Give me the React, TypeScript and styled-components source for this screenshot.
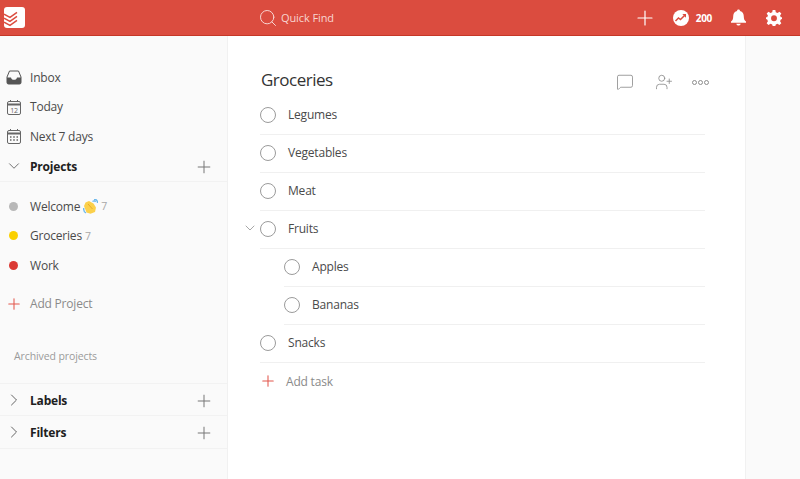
import React from "react";
import styled, { createGlobalStyle } from "styled-components";
import { Search, Plus, ChevronDown, ChevronRight, MessageSquare, UserPlus } from "lucide-react";

const GlobalStyle = createGlobalStyle`
  html, body {
    margin: 0;
    padding: 0;
    height: 100%;
    background: #fff;
    overflow: hidden;
    font-family: "Open Sans", "Noto Sans", sans-serif;
  }
  * { box-sizing: border-box; }
`;

const Page = styled.div`
  width: 800px;
  height: 479px;
  display: flex;
  flex-direction: column;
  overflow: hidden;
`;

const TopBar = styled.header`
  height: 36px;
  flex: none;
  display: flex;
  align-items: center;
  background: #db4c3f;
  border-bottom: 1px solid #c53727;
  color: #fff;
`;

const LogoSlot = styled.div`
  width: 258px;
  padding-left: 4px;
  display: flex;
  align-items: center;
`;

const QuickFind = styled.div`
  display: flex;
  align-items: center;
  gap: 3px;
  color: #f8d5d1;
  font-size: 11px;
  letter-spacing: -0.1px;
  flex: 1;
`;

const TopActions = styled.div`
  display: flex;
  align-items: center;
  gap: 20px;
  padding-right: 18px;
`;

const Karma = styled.div`
  display: flex;
  align-items: center;
  gap: 7px;
  margin: 0 -1px 0 -4px;
  font-size: 10px;
  font-weight: 700;
  letter-spacing: -0.3px;
`;

const Body = styled.div`
  flex: 1;
  display: flex;
  min-height: 0;
`;

const Sidebar = styled.aside`
  width: 228px;
  flex: none;
  background: #fafafa;
  border-right: 1px solid #f1f1f1;
  padding-top: 26.5px;
`;

const NavItem = styled.div`
  height: 29.5px;
  display: flex;
  align-items: center;
  color: #4a4a4a;
  font-size: 12px;
  letter-spacing: -0.2px;
`;

const NavIcon = styled.span`
  width: 30px;
  flex: none;
  display: flex;
  justify-content: center;
  padding-right: 3px;
`;

const Dot = styled.span<{ $color: string }>`
  width: 9px;
  height: 9px;
  border-radius: 50%;
  background: ${p => p.$color};
`;

const Count = styled.span`
  margin-left: 3px;
  color: #a8a8a8;
  font-size: 10.5px;
`;

const Section = styled.div<{ $top?: boolean; $height: number }>`
  height: ${p => p.$height}px;
  display: flex;
  align-items: center;
  justify-content: space-between;
  padding-right: 13px;
  padding-top: ${p => (p.$top ? "1px" : "0")};
  border-bottom: 1px solid #f2f2f2;
  border-top: ${p => (p.$top ? "1px solid #f2f2f2" : "none")};
`;

const SectionTitle = styled.div`
  display: flex;
  align-items: center;
  color: #202020;
  font-size: 12px;
  font-weight: 700;
  letter-spacing: -0.2px;
`;

const SectionPlus = styled(Plus).attrs({ size: 20, strokeWidth: 1.2, color: "#777" })`
  margin-top: 2px;
`;

const ProjectList = styled.div`
  padding-top: 9.5px;
`;

const AddRow = styled(NavItem)`
  margin-top: 9px;
  color: #8a8a8a;
`;

const Archived = styled.div`
  margin-top: 30px;
  padding-left: 14px;
  height: 34.5px;
  color: #9a9a9a;
  font-size: 10.5px;
  line-height: 15px;
  letter-spacing: -0.1px;
`;

const Main = styled.main`
  width: 517px;
  flex: none;
  background: #fff;
  padding: 0 40px 0 32px;
`;

const TitleRow = styled.div`
  height: 61px;
  display: flex;
  align-items: center;
  justify-content: space-between;
  padding-top: 28px;
  padding-bottom: 1px;
`;

const Title = styled.h1`
  margin: 0 0 0 1px;
  font-size: 17px;
  font-weight: 400;
  line-height: 30px;
  letter-spacing: -0.5px;
  color: #333;
`;

const ViewActions = styled.div`
  display: flex;
  align-items: center;
  gap: 21px;
  color: #8c8c8c;
  margin: 4px -4px 0 0;
`;

const MoreSlot = styled.span`
  display: flex;
  margin-left: -2px;
`;

const Task = styled.div<{ $child?: boolean }>`
  position: relative;
  height: 38px;
  margin-left: ${p => (p.$child ? "24px" : "0")};
  padding: 0 0 2px 28px;
  display: flex;
  align-items: center;
  border-bottom: 1px solid #f0f0f0;
  color: #4a4a4a;
  font-size: 12px;
  letter-spacing: -0.2px;
`;

const Check = styled.span`
  position: absolute;
  left: 0;
  top: 10px;
  width: 16px;
  height: 16px;
  border: 1px solid #9b9b9b;
  border-radius: 50%;
`;

const Collapse = styled.span`
  position: absolute;
  left: -18px;
  top: 9px;
  display: flex;
  color: #909090;
`;

const AddTask = styled.div`
  height: 38px;
  margin-left: -1px;
  padding-bottom: 2px;
  display: flex;
  align-items: center;
  gap: 9px;
  color: #8a8a8a;
  font-size: 12px;
  letter-spacing: -0.2px;
`;

const Gutter = styled.div`
  flex: 1;
  background: #fafafa;
  border-left: 1px solid #f1f1f1;
`;

const Logo = () => (
  <svg width="21" height="21" viewBox="0 0 21 21">
    <rect width="21" height="21" rx="3" fill="#fff" />
    <g fill="none" stroke="#db4c3f" strokeWidth="1.5">
      <path d="M0 7.2 L6 10.4 L13 5.4" />
      <path d="M0 11.2 L6 14.4 L13 9.4" />
      <path d="M0 15.2 L6 18.4 L13 13.4" />
    </g>
  </svg>
);

const KarmaIcon = () => (
  <svg width="16" height="16" viewBox="0 0 16 16">
    <circle cx="8" cy="8" r="8" fill="#fff" />
    <path d="M2.5 11 L5.5 8 L7.5 9.5 L11.5 5.5" fill="none" stroke="#db4c3f" strokeWidth="1.5" />
    <path d="M9.3 4 H13 V7.7 Z" fill="#db4c3f" />
  </svg>
);

const Bell = () => (
  <svg width="15" height="17" viewBox="0 0 15 17">
    <path d="M7.5 0.5 C8.5 0.5 9 1.2 9 2 C11.8 2.7 12.8 5 12.8 7.5 C12.8 10.2 13.6 11.5 15 12.6 V13.8 H0 V12.6 C1.4 11.5 2.2 10.2 2.2 7.5 C2.2 5 3.2 2.7 6 2 C6 1.2 6.5 0.5 7.5 0.5 Z" fill="#fff" />
    <path d="M5.3 14.7 H9.7 C9.5 15.9 8.6 16.5 7.5 16.5 C6.4 16.5 5.5 15.9 5.3 14.7 Z" fill="#fff" />
  </svg>
);

const Gear = () => (
  <svg width="16" height="16" viewBox="0 0 24 24">
    <path
      fillRule="evenodd"
      fill="#fff"
      d="M10 0 H14 L14.7 3.4 L17.3 4.5 L20.2 2.6 L23 5.4 L21.1 8.3 L22.2 10.9 L24 11 V13.5 L22.2 14.3 L21.1 16.9 L23 19.8 L20.2 22.6 L17.3 20.7 L14.7 21.8 L14 24 H10 L9.3 21.8 L6.7 20.7 L3.8 22.6 L1 19.8 L2.9 16.9 L1.8 14.3 L0 13.5 V11 L1.8 10.9 L2.9 8.3 L1 5.4 L3.8 2.6 L6.7 4.5 L9.3 3.4 Z M12 8 A4.4 4.4 0 1 0 12 16.8 A4.4 4.4 0 1 0 12 8 Z"
    />
  </svg>
);

const InboxIcon = () => (
  <svg width="16" height="15" viewBox="0 0 16 15">
    <path d="M3.5 1 H12.5 L15 7 V12.5 A1.5 1.5 0 0 1 13.5 14 H2.5 A1.5 1.5 0 0 1 1 12.5 V7 Z" fill="none" stroke="#555" strokeWidth="1" />
    <path d="M1 7.5 H5 C5.3 9 6.3 9.8 8 9.8 C9.7 9.8 10.7 9 11 7.5 H15 V12.5 A1.5 1.5 0 0 1 13.5 14 H2.5 A1.5 1.5 0 0 1 1 12.5 Z" fill="#555" />
  </svg>
);

const CalendarFrame = ({ children }: { children: React.ReactNode }) => (
  <svg width="16" height="16" viewBox="0 0 16 16">
    <rect x="1.5" y="2.5" width="13" height="13" rx="1.5" fill="none" stroke="#666" />
    <path d="M1.5 5.5 H14.5" stroke="#666" strokeWidth="2" />
    <path d="M4.5 1 V3 M11.5 1 V3" stroke="#666" />
    {children}
  </svg>
);

const TodayIcon = () => (
  <CalendarFrame>
    <text x="8" y="13.5" textAnchor="middle" fontSize="7" fill="#666" fontFamily="Open Sans, sans-serif">12</text>
  </CalendarFrame>
);

const WeekIcon = () => (
  <CalendarFrame>
    <path d="M4 9 H5.5 M7.2 9 H8.8 M10.5 9 H12 M4 12 H5.5 M7.2 12 H8.8 M10.5 12 H12" stroke="#666" strokeWidth="1.3" />
  </CalendarFrame>
);

const Clap = () => (
  <svg width="15" height="15" viewBox="0 0 15 15" style={{ marginLeft: 3 }}>
    <path d="M9.5 2.5 Q11.5 1 12.5 3 M11 0.6 Q14.5 0 14.6 4 M0.8 9 Q0.2 12.5 3 14" fill="none" stroke="#6cb8ec" strokeWidth="1.4" />
    <path d="M2.5 3.5 L6 2 L10.5 4.5 L13 8.5 L12 13 L7.5 14.8 L3.5 13.5 L1 7 Z" fill="#fbd04b" />
    <path d="M5 5 L9.5 10" stroke="#e9ab2a" />
  </svg>
);

const More = () => (
  <svg width="17" height="5" viewBox="0 0 17 5">
    <g fill="none" stroke="#8c8c8c" strokeWidth="1">
      <circle cx="2.5" cy="2.5" r="2" />
      <circle cx="8.5" cy="2.5" r="2" />
      <circle cx="14.5" cy="2.5" r="2" />
    </g>
  </svg>
);

type Row = { label: string; child?: boolean; open?: boolean };

const tasks: Row[] = [
  { label: "Legumes" },
  { label: "Vegetables" },
  { label: "Meat" },
  { label: "Fruits", open: true },
  { label: "Apples", child: true },
  { label: "Bananas", child: true },
  { label: "Snacks" }
];

const projects = [
  { name: "Welcome", color: "#b8b8b8", count: 7, clap: true },
  { name: "Groceries", color: "#fad000", count: 7 },
  { name: "Work", color: "#db3a34" }
];

export default function App() {
  return (
    <Page>
      <GlobalStyle />
      <TopBar>
        <LogoSlot>
          <Logo />
        </LogoSlot>
        <QuickFind>
          <Search size={20} strokeWidth={1.2} />
          Quick Find
        </QuickFind>
        <TopActions>
          <Plus size={24} strokeWidth={1.2} />
          <Karma>
            <KarmaIcon />
            200
          </Karma>
          <Bell />
          <Gear />
        </TopActions>
      </TopBar>
      <Body>
        <Sidebar>
          <NavItem><NavIcon><InboxIcon /></NavIcon>Inbox</NavItem>
          <NavItem><NavIcon><TodayIcon /></NavIcon>Today</NavItem>
          <NavItem><NavIcon><WeekIcon /></NavIcon>Next 7 days</NavItem>
          <Section $height={31}>
            <SectionTitle>
              <NavIcon><ChevronDown size={18} strokeWidth={1.1} color="#555" /></NavIcon>
              Projects
            </SectionTitle>
            <SectionPlus />
          </Section>
          <ProjectList>
            {projects.map(p => (
              <NavItem key={p.name}>
                <NavIcon><Dot $color={p.color} /></NavIcon>
                {p.name}
                {p.clap && <Clap />}
                {p.count && <Count>{p.count}</Count>}
              </NavItem>
            ))}
            <AddRow>
              <NavIcon><Plus size={18} strokeWidth={1.4} color="#e2574c" /></NavIcon>
              Add Project
            </AddRow>
          </ProjectList>
          <Archived>Archived projects</Archived>
          <Section $top $height={33}>
            <SectionTitle>
              <NavIcon><ChevronRight size={20} strokeWidth={1.1} color="#555" /></NavIcon>
              Labels
            </SectionTitle>
            <SectionPlus />
          </Section>
          <Section $height={33}>
            <SectionTitle>
              <NavIcon><ChevronRight size={20} strokeWidth={1.1} color="#555" /></NavIcon>
              Filters
            </SectionTitle>
            <SectionPlus />
          </Section>
        </Sidebar>
        <Main>
          <TitleRow>
            <Title>Groceries</Title>
            <ViewActions>
              <MessageSquare size={18} strokeWidth={1.1} />
              <UserPlus size={18} strokeWidth={1.1} />
              <MoreSlot><More /></MoreSlot>
            </ViewActions>
          </TitleRow>
          {tasks.map(t => (
            <Task key={t.label} $child={t.child}>
              {t.open && <Collapse><ChevronDown size={16} strokeWidth={1.2} /></Collapse>}
              <Check />
              {t.label}
            </Task>
          ))}
          <AddTask>
            <Plus size={18} strokeWidth={1.4} color="#e2574c" />
            Add task
          </AddTask>
        </Main>
        <Gutter />
      </Body>
    </Page>
  );
}
